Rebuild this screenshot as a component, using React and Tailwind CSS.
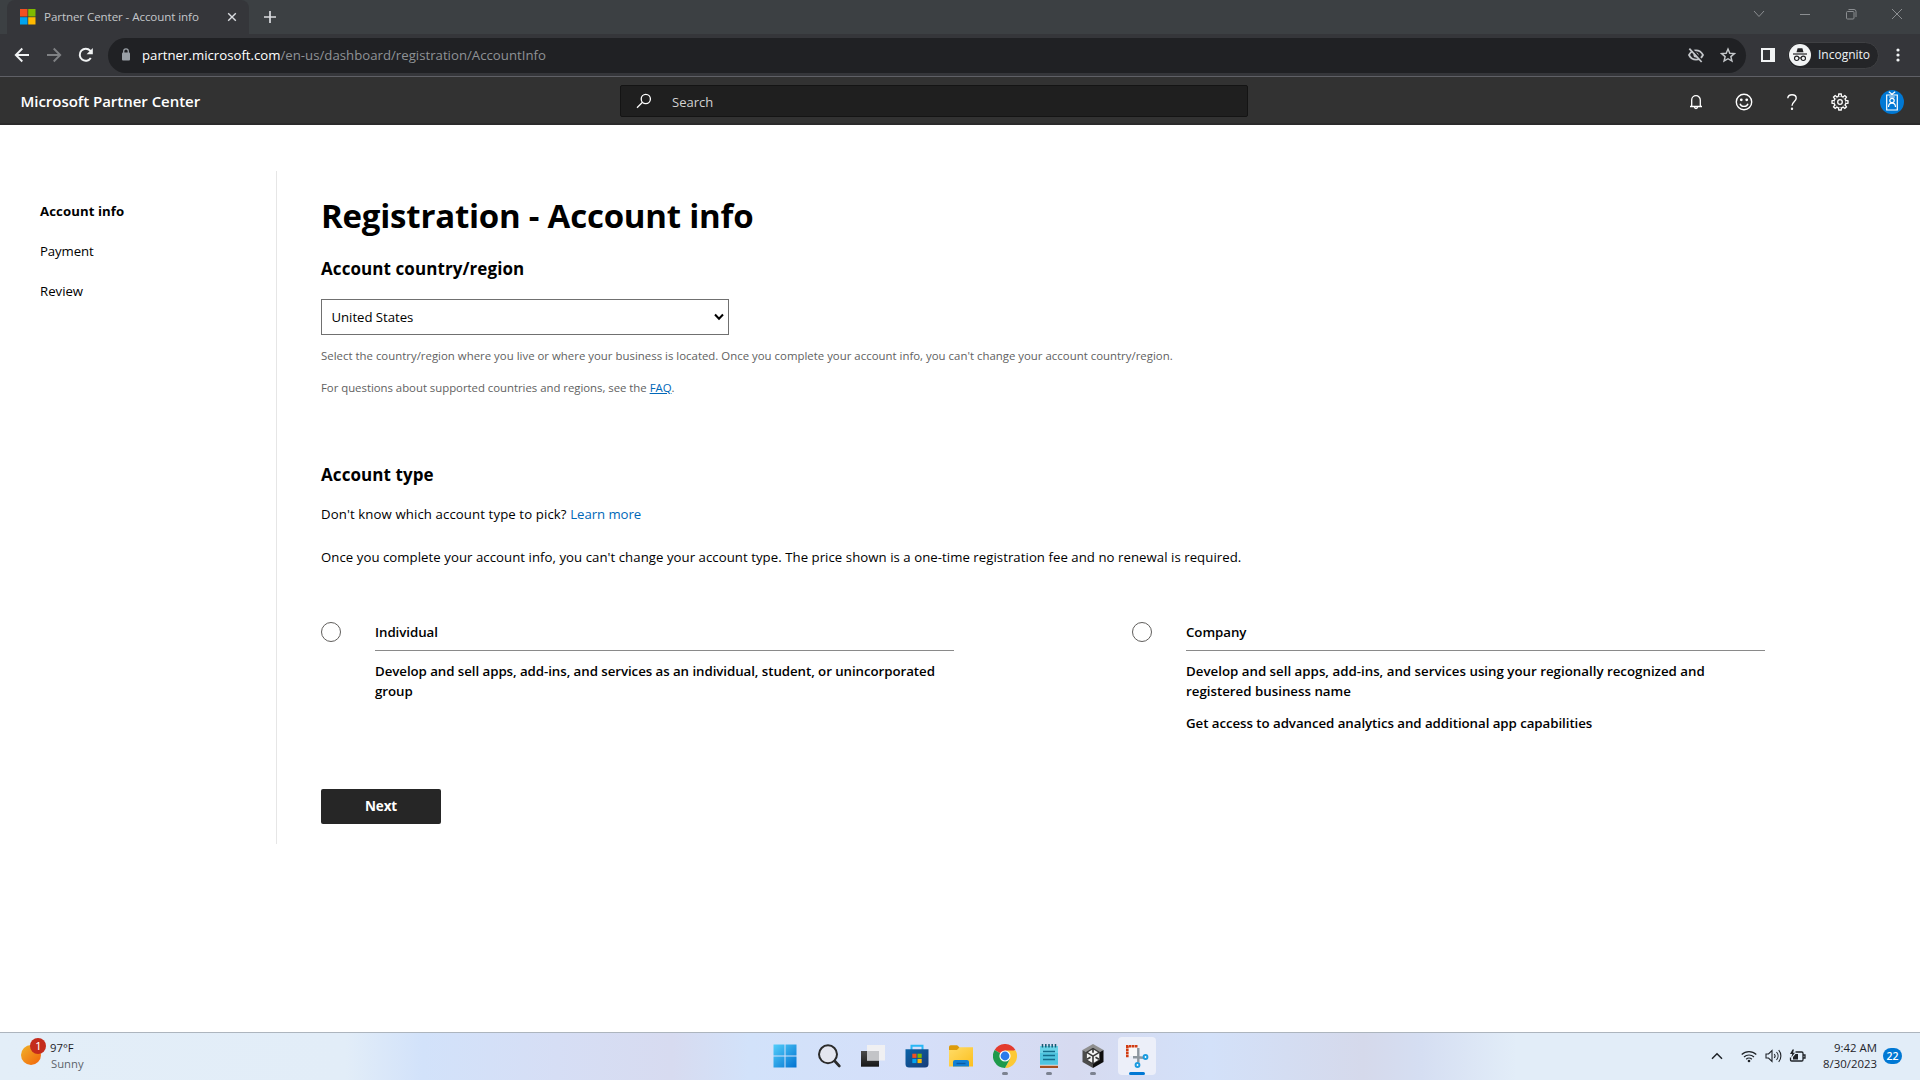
const tab = (
  <svg width="16" height="16" viewBox="0 0 16 16" className="shrink-0">
    <path fill="#f25022" d="M0 0h7.5v7.5H0z" />
    <path fill="#7fba00" d="M8.2 0h7.3v7.5H8.2z" />
    <path fill="#00a4ef" d="M0 8.2h7.5v7.3H0z" />
    <path fill="#ffb900" d="M8.2 8.2h7.3v7.3H8.2z" />
  </svg>
);

function Line({ w = 16, h = 16, box, sw = 1.2, className = '', children }) {
  return (
    <svg width={w} height={h} viewBox={box || `0 0 ${w} ${h}`} fill="none" stroke="currentColor" strokeWidth={sw} className={'shrink-0 ' + className}>
      {children}
    </svg>
  );
}

function TabStrip() {
  return (
    <div className="flex h-[34px] bg-[#3c4043] pl-[7px] text-[#dadce0]">
      <div className="flex h-[34px] w-[242px] shrink-0 items-center rounded-t-lg bg-[#35363a] pl-[13px]">
        {tab}
        <span className="ml-[8px] mr-auto whitespace-nowrap text-[11.6px] tracking-[-0.09px] text-[#c4c7ca]">Partner Center - Account info</span>
        <Line w={10} h={10} sw={1.4} className="mr-[12px]"><path d="M1.2 1.2l7.6 7.6M8.800 1.200L1.200 8.800" /></Line>
      </div>
      <Line w={14} h={14} sw={1.7} className="ml-[14px] mt-[10px]"><path d="M7 1v12M1 7h12" /></Line>
      <div className="ml-auto flex h-[28px] items-center pr-[17px] text-[#8b8e91]">
        <Line w={12} h={12} sw={1} className="mr-[34px]"><path d="M1 3l5 5.500 5-5.500" /></Line>
        <Line w={12} h={12} sw={1} className="mr-[34px]"><path d="M1 6.500h10" /></Line>
        <Line w={12} h={12} sw={1} className="mr-[34px]"><rect x="1.500" y="3.500" width="7.500" height="7.500" rx="1" /><path d="M3.500 1.500H9a2 2 0 0 1 2 2V9" /></Line>
        <Line w={12} h={12} sw={1}><path d="M1 1l10 10M11 1L1 11" /></Line>
      </div>
    </div>
  );
}

function Toolbar() {
  return (
    <div className="flex h-[43px] items-center border-b border-[#5f6066] bg-[#35363a] pl-[14px]">
      <Line sw={1.9} className="text-[#f1f3f4]"><path d="M15 8H2M8.300 1.500L1.800 8l6.500 6.500" /></Line>
      <Line sw={1.9} className="ml-[16px] text-[#7f8184]"><path d="M1 8h13M7.700 1.500L14.200 8l-6.500 6.500" /></Line>
      <Line sw={2} className="ml-[16px] text-[#f1f3f4]"><path d="M12.800 11A6 6 0 1 1 12.200 3.700L13.600 5.200" /><path d="M14.800 1v6.200H8.600z" fill="currentColor" stroke="none" /></Line>
      <div className="ml-[14px] flex h-[35px] w-[1638px] items-center rounded-full bg-[#202124] pl-[13px]">
        <svg width="10" height="14" viewBox="0 0 10 14" className="mb-[1px] text-[#9aa0a6]">
          <rect x="1" y="4.500" width="8" height="8" rx="1" fill="currentColor" />
          <path d="M2.700 5V3.200a2.300 2.300 0 0 1 4.600 0V5" fill="none" stroke="currentColor" strokeWidth="1.300" />
        </svg>
        <span className="ml-[11px] pt-[1px] text-[13.2px] tracking-[0.01px] text-[#8f9296]">
          <span className="text-white">partner.microsoft.com</span>/en-us/dashboard/registration/AccountInfo
        </span>
        <svg width="16" height="16" viewBox="0 0 24 24" className="ml-auto text-[#c4c7ca]" fill="none" stroke="currentColor" strokeWidth="2.600">
          <path d="M1.500 12C4 7 8 5 12 5s8 2 10.500 7c-2.500 5-6.500 7-10.500 7S4 17 1.500 12z" />
          <circle cx="12" cy="12" r="3.800" fill="currentColor" stroke="none" />
          <path d="M4 1l18 20.500" stroke="#202124" strokeWidth="3" />
          <path d="M2 2.500l18.500 20" />
        </svg>
        <Line w={16} h={16} box="0 0 24 24" sw={2.2} className="ml-[16px] mr-[10px] text-[#c4c7ca]">
          <path d="M12 3l2.700 6.300 6.800.6-5.200 4.500 1.600 6.700L12 17.600l-5.900 3.500 1.600-6.700L2.500 9.900l6.800-.6z" />
        </Line>
      </div>
      <svg width="14" height="14" viewBox="0 0 14 14" className="ml-[15px]"><path fillRule="evenodd" fill="#f1f3f4" d="M0 0h14v14H0zM2 2v10h7V2z" /></svg>
      <div className="ml-[12px] flex h-[27px] w-[92px] items-center rounded-full border border-[#3f4043] bg-[#242528] pl-px">
        <svg width="22" height="22" viewBox="0 0 22 22">
          <circle cx="11" cy="11" r="11" fill="#f1f3f4" />
          <path d="M7.500 8.300L8.600 4.200h4.800l1.100 4.100z" fill="#202124" />
          <path d="M4 10h14" stroke="#202124" strokeWidth="1.200" />
          <g fill="none" stroke="#202124" strokeWidth="1.100"><circle cx="7.700" cy="14.300" r="2.200" /><circle cx="14.300" cy="14.300" r="2.200" /><path d="M9.900 14.200q1.100-.8 2.200 0" /></g>
        </svg>
        <span className="ml-[7px] text-[12px] text-[#f1f3f4]">Incognito</span>
      </div>
      <svg width="4" height="14" viewBox="0 0 4 14" className="ml-[17px]" fill="#f1f3f4"><circle cx="2" cy="2" r="1.600" /><circle cx="2" cy="7" r="1.600" /><circle cx="2" cy="12" r="1.600" /></svg>
    </div>
  );
}

const gearTeeth = [0, 45, 90, 135, 180, 225, 270, 315];

function SiteHeader() {
  return (
    <div className="flex h-[48px] items-center border-b-2 border-[#2b2a2b] bg-[#323232] pt-[2px] text-white">
      <div className="w-[620px] pl-[20.500px] text-[15px] font-semibold tracking-[-0.03px]">Microsoft Partner Center</div>
      <div className="flex h-[32px] w-[628px] items-center rounded-[2px] border border-[#141414] bg-[#1f1f1f] pl-[15px]">
        <Line sw={1.3}><circle cx="9.800" cy="6" r="4.600" /><path d="M6.500 9.300L1 14.800" /></Line>
        <span className="ml-[20px] pt-[3px] text-[13px] text-[#d2d2d2]">Search</span>
      </div>
      <div className="ml-auto flex items-center pr-[16px] pt-[2px]">
        <Line w={14} h={16} sw={1.3} className="mr-[32px]"><path d="M1 12.500h12M2.700 12.500V6a4.300 4.300 0 0 1 8.600 0v6.500M5.500 13a1.500 1.500 0 0 0 3 0" /></Line>
        <Line w={18} h={18} sw={1.4} className="mr-[34px]"><circle cx="9" cy="9" r="7.700" /><path d="M5 10.700a4.300 4.300 0 0 0 8 0" /><circle cx="6.300" cy="6.800" r=".7" fill="currentColor" /><circle cx="11.700" cy="6.800" r=".7" fill="currentColor" /></Line>
        <Line w={10} h={16} sw={1.4} className="mr-[34px]"><path d="M.8 4.300C1 2 2.700.8 5 .8S9.200 2.200 9.200 4.300C9.200 7.500 5 7.500 5 11.800" /><circle cx="5" cy="14.800" r=".5" fill="currentColor" /></Line>
        <Line w={18} h={18} sw={1.3} className="mr-[31px]">
          <circle cx="9" cy="9" r="5.900" /><circle cx="9" cy="9" r="2.300" />
          {gearTeeth.map((a) => <path key={a} fill="#323232" d="M7.400 3.400L7.800 1h2.400l.4 2.400" transform={`rotate(${a} 9 9)`} />)}
        </Line>
        <svg width="24" height="24" viewBox="0 0 24 24">
          <circle cx="12" cy="12" r="12" fill="#0078d4" />
          <g fill="none" stroke="#fff" strokeWidth="1.200"><path d="M6.700 5h10.600v15H6.700zM8.800 1.700l3.200 2.500 3.200-2.500M9.200 7h5.600" /><circle cx="12" cy="10.500" r="2.200" /><path d="M8.500 17c.2-5.200 6.800-5.200 7 0" /></g>
        </svg>
      </div>
    </div>
  );
}

function AccountOption({ title, lines, extra, fit }) {
  return (
    <div className="flex w-[811px]">
      <div className="mt-px h-[20px] w-[20px] rounded-full border border-[#605e5c]" />
      <div className="ml-[34px] w-[579px] text-[13.3px] font-semibold leading-[20px] tracking-[-0.06px]">
        <div className="h-[30px] border-b border-[#8a8a8a] pt-px">{title}</div>
        <div className={'whitespace-nowrap pt-[10px] ' + fit}>{lines[0]}<br />{lines[1]}</div>
        {extra && <div className="pt-[12px]">{extra}</div>}
      </div>
    </div>
  );
}

function Page() {
  return (
    <div className="flex h-[907px] bg-white pt-[46px] text-black">
      <nav className="h-[673px] w-[277px] shrink-0 border-r border-[#e6e6e6] pl-[40px] pt-[30px] text-[13.2px] leading-[20px]">
        <div className="font-bold tracking-[0.08px]">Account info</div>
        <div className="mt-[20px] tracking-[-0.1px]">Payment</div>
        <div className="mt-[20px]">Review</div>
      </nav>
      <main className="shrink-0 pl-[44px] text-[13.2px]">
        <h1 className="mt-[25px] h-[40px] text-[33px] font-bold leading-[40px] tracking-[-0.22px]">Registration - Account info</h1>
        <h2 className="mt-[21px] h-[24px] text-[17px] font-bold leading-[24px] tracking-[0.08px]">Account country/region</h2>
        <div className="mt-[18px] flex h-[36px] w-[408px] items-center border border-[#707070] pl-[9.500px]">
          <span className="pt-[2px] tracking-[-0.04px]">United States</span>
          <Line w={10} h={8} sw={2} className="ml-auto mr-[4px]"><path d="M1 1.500L5 5.800 9 1.500" /></Line>
        </div>
        <div className="mt-[11px] text-[11.4px] leading-[20px] tracking-[0.01px] text-[#616161]">Select the country/region where you live or where your business is located. Once you complete your account info, you can't change your account country/region.</div>
        <div className="mt-[12px] text-[11.4px] leading-[20px] tracking-[-0.03px] text-[#616161]">For questions about supported countries and regions, see the <a className="text-[#0067b8] underline">FAQ</a>.</div>
        <h2 className="mt-[65px] h-[24px] text-[17px] font-bold leading-[24px] tracking-[0.08px]">Account type</h2>
        <div className="mt-[17px] leading-[20px] tracking-[0.11px]">Don't know which account type to pick? <a className="tracking-[-0.05px] text-[#0067b8]">Learn more</a></div>
        <div className="mt-[23px] leading-[20px] tracking-[0.05px]">Once you complete your account info, you can't change your account type. The price shown is a one-time registration fee and no renewal is required.</div>
        <div className="mt-[54px] flex h-[168px]">
          <AccountOption title="Individual" fit="tracking-[-0.065px]" lines={['Develop and sell apps, add-ins, and services as an individual, student, or unincorporated', 'group']} />
          <AccountOption title="Company" fit="tracking-[0px]" lines={['Develop and sell apps, add-ins, and services using your regionally recognized and', 'registered business name']} extra="Get access to advanced analytics and additional app capabilities" />
        </div>
        <button className="block h-[35px] w-[120px] rounded-[2px] bg-[#262626] text-[13.5px] font-bold tracking-[-0.1px] text-white">Next</button>
      </main>
    </div>
  );
}

const logoPaths = ['M.5.500h11v11H.5z', 'M12.500.500h11v11h-11z', 'M.5 12.500h11v11H.5z', 'M12.500 12.500h11v11h-11z'];

function StartIcon() {
  return (
    <svg width="24" height="24" viewBox="0 0 24 24">
      <defs><linearGradient id="start" gradientUnits="userSpaceOnUse" x1="0" y1="0" x2="24" y2="24"><stop stopColor="#55d0fb" /><stop offset="1" stopColor="#0070d0" /></linearGradient></defs>
      {logoPaths.map((d) => <path key={d} d={d} fill="url(#start)" />)}
    </svg>
  );
}
function SearchIcon() {
  return <svg width="24" height="24" viewBox="0 0 24 24" fill="none" stroke="#2b2b2b" strokeLinecap="round"><circle cx="11" cy="10.300" r="9" fill="#e4e6ef" strokeWidth="2" /><path d="M17.700 17l4.600 5" strokeWidth="2.600" /></svg>;
}
function TaskViewIcon() {
  return (
    <svg width="24" height="24" viewBox="0 0 24 24">
      <defs><linearGradient id="dark" x1="0" y1="0" x2="0" y2="1"><stop stopColor="#4a4a4a" /><stop offset="1" stopColor="#161616" /></linearGradient></defs>
      <path d="M0 7h18v15.700H0z" fill="url(#dark)" /><path d="M6 1h18v15.500H6z" fill="#f0f0f2" /><path d="M6 7h12v9.500H6z" fill="#c3c4c7" />
    </svg>
  );
}
function StoreIcon() {
  return (
    <svg width="24" height="24" viewBox="0 0 24 24">
      <defs><linearGradient id="store" x1="0" y1="0" x2="1" y2="1"><stop stopColor="#0a63a8" /><stop offset="1" stopColor="#183c78" /></linearGradient></defs>
      <path d="M6.500 6V1.800h11V6" fill="none" stroke="#28b7f5" strokeWidth="2" />
      <path d="M.5 5.300h23V20q0 3.500-3.500 3.500H4Q.5 23.500.5 20z" fill="url(#store)" />
      <path fill="#f25022" d="M7.300 9.700h4.200v4.200H7.300z" /><path fill="#7fba00" d="M12.500 9.700h4.200v4.200h-4.200z" /><path fill="#00a4ef" d="M7.300 14.900h4.200v4.200H7.300z" /><path fill="#ffb900" d="M12.500 14.900h4.200v4.200h-4.200z" />
    </svg>
  );
}
function FolderIcon() {
  return (
    <svg width="24" height="24" viewBox="0 0 24 24">
      <defs><linearGradient id="fold" x1="0" y1="0" x2="1" y2="1"><stop stopColor="#ffdc68" /><stop offset="1" stopColor="#fcbf1e" /></linearGradient></defs>
      <path d="M0 3q0-1.700 1.700-1.700h6.500L10.500 3.500V8H0z" fill="#dd9b0c" />
      <path d="M0 6h8l2.600-2.700H24V22.500H0z" fill="url(#fold)" />
      <path d="M4 22.500V18q0-2 2-2h12q2 0 2 2v4.500z" fill="#1280d4" /><path d="M7.500 18.800h9v1.400h-9z" fill="#0b5aa3" />
    </svg>
  );
}
function ChromeIcon() {
  return (
    <svg width="24" height="24" viewBox="0 0 24 24">
      <path d="M12 12L1.600 6A12 12 0 0 1 22.400 6z" fill="#e33b2e" />
      <path d="M12 6.500h10.700A12 12 0 0 1 12 24l5-9z" fill="#fcc934" />
      <path d="M1.600 6A12 12 0 0 0 12 24l4.900-9L12 12z" fill="#1e9a4b" />
      <circle cx="12" cy="12" r="5.600" fill="#fff" /><circle cx="12" cy="12" r="4.400" fill="#2a7bea" />
    </svg>
  );
}
function NotepadIcon() {
  return (
    <svg width="20" height="24" viewBox="0 0 20 24">
      <path d="M1 21h18v3H1z" fill="#a5501f" /><path d="M1 20.500h18v1.200H1z" fill="#f3f3f3" />
      <path d="M1 2h18v18.800H1z" fill="#50c5df" /><path d="M1 2h18v7H1z" fill="#6bd3e8" />
      <path d="M3.500 0v3.500M6.800 0v3.500M10 0v3.500M13.200 0v3.500M16.500 0v3.500" stroke="#155a72" strokeWidth="1.500" />
      <path d="M4 7.500h12M4 11.500h12M4 15.500h12" stroke="#136d8c" strokeWidth="1.700" />
    </svg>
  );
}
function UnityIcon() {
  return (
    <svg width="24" height="24" viewBox="0 0 24 24">
      <path d="M12 0l10.500 6L12 12 1.500 6z" fill="#8f8f8f" />
      <path d="M1.500 6L12 12v12L1.500 18z" fill="#4c4c4c" />
      <path d="M22.500 6L12 12v12l10.500-6z" fill="#0d0d0d" />
      <path d="M12 3.800l7 4.100v8.200l-7 4.100-7-4.100V7.900z" fill="#383838" />
      <g fill="#f4f4f4">
        <path d="M12 5.300l5 2.900-5 3-5-3z" />
        <path d="M5.800 9.300l5.400 3.200v6.200l-5.400-3.200z" />
        <path d="M18.200 9.300l-5.400 3.200v6.200l5.400-3.200z" />
      </g>
      <path d="M12 4.500v4.200M6 15.200l3.500-2M18 15.200l-3.500-2" stroke="#383838" strokeWidth="1.700" />
    </svg>
  );
}
function SnipIcon() {
  return (
    <svg width="26" height="26" viewBox="0 0 26 26">
      <path d="M3 3h10v10H3z" fill="#f8f8fa" />
      <path d="M13.500 3.300H3.300V14.500" fill="none" stroke="#d13b12" strokeWidth="2.600" strokeDasharray="2.600 .5" />
      <path d="M14.300 5v10M9 14.200h5l5 .6M14.300 14v5.500" fill="none" stroke="#8d979f" strokeWidth="2.400" />
      <g fill="#fff" stroke="#1a9be0" strokeWidth="2"><circle cx="21.500" cy="14" r="1.900" /><circle cx="13.500" cy="22" r="1.900" /></g>
    </svg>
  );
}

const apps = [
  { name: 'start', Icon: StartIcon }, { name: 'search', Icon: SearchIcon }, { name: 'tasks', Icon: TaskViewIcon },
  { name: 'store', Icon: StoreIcon }, { name: 'files', Icon: FolderIcon }, { name: 'chrome', Icon: ChromeIcon, open: true },
  { name: 'notepad', Icon: NotepadIcon, open: true }, { name: 'unity', Icon: UnityIcon, open: true }, { name: 'snip', Icon: SnipIcon, active: true },
];

function Taskbar() {
  return (
    <div className="grid h-[48px] grid-cols-[763px_396px_761px] border-t border-[#adb5be] bg-[linear-gradient(90deg,#e3eef8_0%,#e2edf8_18%,#d2e2fa_22%,#d6def5_29%,#d7dbf0_35%,#d2e2fa_39%,#d5dff9_48%,#d6daf0_56%,#d3e1f9_63%,#d5d9eb_71%,#d5def2_74%,#e2edf8_79%,#e2edf8_100%)] text-[#1f2328]">
      <div className="flex pl-[20px] pt-[4px]">
        <svg width="28" height="30" viewBox="0 0 28 30">
          <defs><linearGradient id="sun" x1="0" y1="0" x2="1" y2="1"><stop stopColor="#f0b429" /><stop offset="1" stopColor="#f2620a" /></linearGradient></defs>
          <circle cx="11" cy="18" r="10" fill="url(#sun)" /><circle cx="18" cy="9" r="8" fill="#c42b1c" />
          <text x="18.500" y="13" textAnchor="middle" fill="#fff" fontSize="11" fontFamily="Noto Sans">1</text>
        </svg>
        <div className="ml-[3px] mt-[3px] text-[11.3px] leading-[16px]">
          <div className="-ml-px">97°F</div><div className="text-[#5d646b]">Sunny</div>
        </div>
      </div>
      <div className="flex">
        {apps.map(({ name, Icon, open, active }) => (
          <div key={name} className={'mx-[3px] mt-[4px] flex h-[38px] w-[38px] flex-col items-center rounded-[4px] ' + (active ? 'bg-[#eceff9]' : '')}>
            <div className="flex h-[35px] items-center pt-[3px]"><Icon /></div>
            {open && <div className="h-[3px] w-[6px] shrink-0 rounded-full bg-[#7c8290]" />}
            {active && <div className="h-[3px] w-[16px] shrink-0 rounded-full bg-[#0078d4]" />}
          </div>
        ))}
      </div>
      <div className="flex h-[46px] items-center justify-end pr-[18px]">
        <Line w={12} h={8} sw={1.5} className="mr-[18px]"><path d="M1 6.700L6 1.700l5 5" /></Line>
        <Line w={16} h={14} sw={1.2} className="mr-[8px]"><path d="M.7 5.500a10.500 10.500 0 0 1 14.600 0M3 8a7.200 7.200 0 0 1 10 0M5.200 10.300a4 4 0 0 1 5.600 0" /><circle cx="8" cy="12" r="1.300" fill="currentColor" stroke="none" /></Line>
        <Line w={17} h={14} sw={1.1} className="mr-[7px]"><path d="M1 5h2.500L7 1.500v11L3.500 9H1zM9.200 5a3 3 0 0 1 0 4M11.500 3a6 6 0 0 1 0 8M13.700 1.200a8.800 8.800 0 0 1 0 11.600" /></Line>
        <Line w={17} h={14} sw={1.3} className="mr-[7px]"><path d="M6.500 3h6.300q1.200 0 1.200 1.200v6.600q0 1.200-1.200 1.200H2.700q-1.200 0-1.200-1.200V8.500M14.500 6h1.500v3h-1.500" /><path d="M4 10.500V8l2.500-3H9v5.500z" fill="currentColor" stroke="none" /><path d="M3.500.5L1 5h2.200L2.300 8.500 6 3.800H4L5 .5z" fill="currentColor" stroke="none" /></Line>
        <div className="w-[64px] text-right text-[11.4px] leading-[16px]">
          <div className="whitespace-nowrap">9:42 AM</div><div>8/30/2023</div>
        </div>
        <div className="ml-[6px] h-[16px] w-[19px] rounded-full bg-[#0078d4] text-center text-[10.5px] font-semibold leading-[16px] text-white">22</div>
      </div>
    </div>
  );
}

export default function App() {
  return (
    <div className="h-[1080px] w-[1920px] overflow-hidden bg-white font-['Open_Sans','Noto_Sans',sans-serif]">
      <TabStrip />
      <Toolbar />
      <SiteHeader />
      <Page />
      <Taskbar />
    </div>
  );
}
